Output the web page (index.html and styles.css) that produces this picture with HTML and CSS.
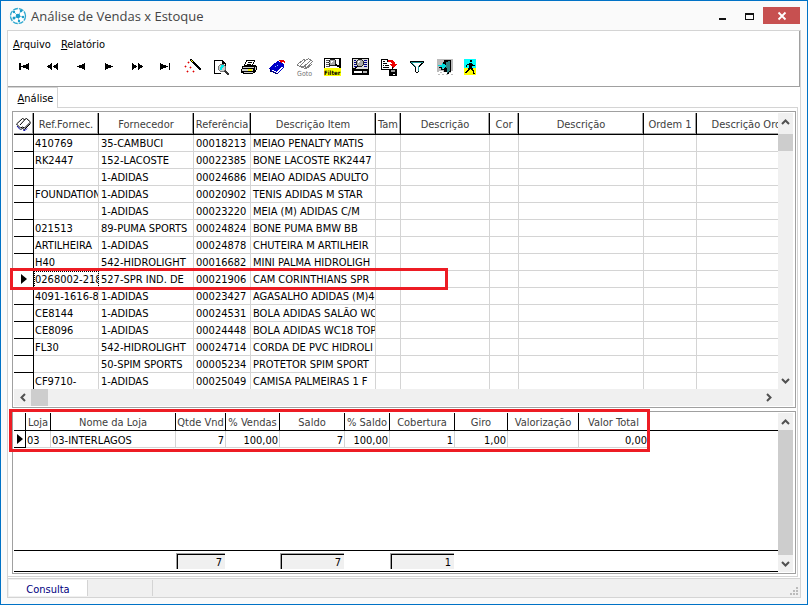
FILE: index.html
```html
<!DOCTYPE html>
<html lang="pt-BR">
<head>
  <meta charset="UTF-8">
  <title>Análise de Vendas x Estoque</title>
  <link rel="stylesheet" href="styles.css">
</head>
<body>

<header class="titulo">
  <svg class="logo" width="18" height="18" viewBox="0 0 18 18">
    <circle cx="9" cy="9" r="7.5" fill="#fff" stroke="#2fa8cf" stroke-width="1.3" stroke-dasharray="5 1"/>
    <path d="M9 9L5 5M9 9L12 4M9 9L14 10M9 9L10 14M9 9L5 11" stroke="#7fcbe2" fill="none"/>
    <circle cx="9" cy="9" r="2.3" fill="#1b9cc9"/>
    <g fill="#1b9cc9"><circle cx="5" cy="5" r="1.2"/><circle cx="12" cy="4" r="1.3"/><circle cx="14" cy="10" r="1.2"/><circle cx="10" cy="14" r="1.2"/><circle cx="5" cy="11" r="1.5"/></g>
  </svg>
  <h1>Análise de Vendas x Estoque</h1>
  <div class="janela">
    <button class="jan" aria-label="Minimizar"><svg width="10" height="10" shape-rendering="crispEdges"><path d="M1 7h7v2H1z" fill="#111"/></svg></button>
    <button class="jan" aria-label="Maximizar"><svg width="10" height="10" shape-rendering="crispEdges"><path d="M0 2h9v7H0zM1 4v4h7V4z" fill="#111" fill-rule="evenodd"/></svg></button>
    <button class="jan fechar" aria-label="Fechar"><svg width="10" height="10"><path d="M1.5 1.5l7 7M8.500 1.5l-7 7" stroke="#fff" stroke-width="1.8"/></svg></button>
  </div>
</header>

<main class="principal">
  <div class="topo">
    <nav class="menu">
      <button><u>A</u>rquivo</button>
      <button><u>R</u>elatório</button>
    </nav>
    <div class="ferramentas">
      <button aria-label="Primeiro"><svg class="icone" viewBox="0 0 18 18"><path d="M4 5h1.500v7H4zM14 5v7L6 8.500z"/></svg></button>
      <button aria-label="Voltar página"><svg class="icone" viewBox="0 0 18 18"><path d="M9 5v7L4 8.500zM15 5v7l-5-3.500z"/></svg></button>
      <button aria-label="Anterior"><svg class="icone" viewBox="0 0 18 18"><path d="M14 5v7L6 8.500z"/></svg></button>
      <button aria-label="Próximo"><svg class="icone" viewBox="0 0 18 18"><path d="M6 5v7l8-3.500z"/></svg></button>
      <button aria-label="Avançar página"><svg class="icone" viewBox="0 0 18 18"><path d="M5 5v7l5-3.500zM11 5v7l5-3.500z"/></svg></button>
      <button aria-label="Último"><svg class="icone" viewBox="0 0 18 18"><path d="M5 5v7l8-3.500zM13.500 5H15v7h-1.500z"/></svg></button>
      <button aria-label="Assistente">
        <svg class="icone" viewBox="0 0 18 18">
          <path d="M7 1h2v1h1v1h1v1h1v1h1v1h1v1h1v1h1v1h1v1h1v2h-2v-1h-1v-1h-1V9h-1V8h-1V7h-1V6h-1V5H9V4H8V3H7z"/>
          <path d="M8 2h1v1h1v1H9V3H8z" fill="#ff0"/>
          <path d="M5 3h1v1h1v1H6v1H5V5H4V4h1zM2 7h1v1h1v1H3v1H2V9H1V8h1zM7 8h1v1h1v1H8v1H7v-1H6V9h1zM4 12h1v1h1v1H5v1H4v-1H3v-1h1zM10 12h1v1h1v1h-1v1h-1v-1H9v-1h1z" fill="#f4a0a0"/>
          <path d="M5 4h1v1H5zM2 8h1v1H2zM7 9h1v1H7zM4 13h1v1H4zM10 13h1v1h-1z" fill="#d00"/>
        </svg>
      </button>
      <button aria-label="Visualizar">
        <svg class="icone" viewBox="0 0 18 18">
          <path d="M3 2h9v1h1v1h1v1h1v3h-1V6h-3V3H4v12h6v1H3z"/>
          <path d="M9 6h4v1h1v1h1v4h-1v1h-1v1H9v-1H8v-1H7V8h1V7h1z" fill="#777"/>
          <path d="M9 7h4v1h1v4h-1v1H9v-1H8V8h1z" fill="#ccc"/>
          <path d="M10 7h3v2h-1v1h-1v2H9V9h1z" fill="#0ee"/>
          <path d="M14 12h1v1h1v1h1v1h1v2h-2v-1h-1v-1h-1v-1h-1v-1h1z" fill="#333"/>
        </svg>
      </button>
      <button aria-label="Imprimir">
        <svg class="icone" viewBox="0 0 18 18">
          <path d="M7 2h9v2h-1v2h-1v1h3v1h1v4h-1v2h-1v1h-2v1H4v-1H2v-4h1V8h2V6h1V4h1z"/>
          <path d="M8 3h7v1h-1v2h-1v1H6V6h1V4h1z" fill="#fff"/>
          <path d="M9 4h4v1H9zM8 6h4v1H8z"/>
          <path d="M4 9h11v1H4zM3 11h11v2H3zM5 14h9v1H5zM16 9h1v3h-1z" fill="#ccc"/>
          <path d="M9 11h4v2H9z" fill="#ee0"/>
        </svg>
      </button>
      <button aria-label="Livro">
        <svg class="icone" viewBox="0 0 18 18">
          <path d="M10 3h2v1h2v1h2v1h1v4h-1v1h-1v1h-1v1h-1v1h-1v1h-1v1H9v-1H7v-1H5v-1H3v-2H2v-1h1V9h1V8h1V7h1V6h1V5h2V4h1z" fill="#0000c8"/>
          <path d="M5 12h2v1h2v1h1v-1h1v-1h1v-1h1v-1h1V9h2v1h-1v1h-1v1h-1v1h-1v1h-1v1H9v-1H7v-1H5z" fill="#fff"/>
          <path d="M3 11h1v2h2v1h2v1h3v1H8v-1H6v-1H3z" fill="#006"/>
          <path d="M12 2h5v1h1v2h-1V4h-2v1h-1V4h-1V3h-1z" fill="#e00"/>
          <path d="M10 7h1v1h-1zM8 8h1v1H8z" fill="#8cf"/>
        </svg>
      </button>
      <button aria-label="Ir para">
        <svg class="icone" viewBox="0 0 18 18">
          <path d="M2.500 6.500l6-5 2 1 3-2 4 3-6 6-2-1-2 1-5-2M10 3L5 8M6 8l2.500 1L15 3M9 10l2 1 6-5" fill="none" stroke="#808080"/>
          <text class="mini cinza" x="2" y="18">Goto</text>
        </svg>
      </button>
      <button aria-label="Filtrar">
        <svg class="icone" viewBox="0 0 18 18">
          <path d="M1 0h17v1H1zM1 1h1v9H1zM16 1h2v9h-2z"/>
          <path d="M3 2h3v1H3zM3 4h2v1H3zM3 6h3v1H3zM3 8h4v1H3z" fill="#555"/>
          <circle cx="9.500" cy="4.500" r="3.500" fill="#aaa" stroke="#222"/>
          <path d="M8 3h2v1H9v1H8z" fill="#fff"/><path d="M12 6h2v1h3v2h-3V8h-2z"/>
          <path d="M1 10h17v8H1z" fill="#ff0"/>
          <text class="mini forte" x="1" y="17">Filter</text>
        </svg>
      </button>
      <button aria-label="Localizar">
        <svg class="icone" viewBox="0 0 18 18">
          <path d="M1 0h17v17H1z"/><path d="M2 1h15v10H2z" fill="#ddd"/>
          <path d="M3 2h2v1H3zM3 4h2v1H3zM3 6h2v1H3zM3 8h3v1H3zM13 2h3v1h-3zM13 4h3v1h-3zM13 6h3v1h-3zM13 8h3v1h-3z" fill="#008"/>
          <circle cx="9" cy="5" r="3.500" fill="#aaa" stroke="#222"/><path d="M7 3h2v1H8v1H7z" fill="#fff"/>
          <path d="M6 8h1v1H6v1H5v1H4v1H2v-2h2V9h2z"/>
          <path d="M3 13h8v2H3z" fill="#fff"/><path d="M12 13h4v2h-4z" fill="#bbb"/>
        </svg>
      </button>
      <button aria-label="Salvar">
        <svg class="icone" viewBox="0 0 18 18">
          <path d="M2 1h7v1h1v1h4v9H2z"/><path d="M3 2h5v2h5v7H3z" fill="#fff"/>
          <path d="M4 3h2v1H4zM4 5h4v1H4zM4 7h1v1H4zM6 7h4v1H6zM4 9h6v1H4z"/>
          <path d="M9 2h5v1h1v1h1v2h2v1h-1v1h-1v1h-1v1h-1V9h-1V8h-1V7h-1V6h2V5h-1V4H9z" fill="#e00"/>
          <path d="M10 11h8v7h-8z"/><path d="M12 12h4v2h-4z" fill="#999"/><path d="M14 16h2v1h-2z" fill="#fff"/>
        </svg>
      </button>
      <button aria-label="Funil">
        <svg class="icone" viewBox="0 0 18 18">
          <path d="M3 3h14v2h-1v1h-1v1h-1v1h-1v1h-1v5h-1v1H9v-1H8V9H7V8H6V7H5V6H4V5H3z"/>
          <path d="M6 5h8v1h-1v1h-1v1h-1v6H9V8H8V7H7V6H6z" fill="#fff"/>
          <path d="M4 4h12v1H4zM5 5h1v1h1v1h1v1h1v1H8V8H7V7H6V6H5zM11 8h1v5h-1z" fill="#299"/>
        </svg>
      </button>
      <button aria-label="Sair">
        <svg class="icone" viewBox="0 0 18 18">
          <path d="M2 1h16v12H2z" fill="#bbb"/>
          <path d="M2 13h2v1H2zM5 14h2v1H5zM8 13h2v1H8zM3 16h2v1H3zM7 16h2v1H7zM14 14h2v1h-2zM16 16h2v1h-2zM11 16h2v1h-2z" fill="#bbb"/>
          <path d="M9 2h7v12h-2v2h-2v-2H9z"/><path d="M11 4l4-1v10l-3 2z" fill="#388"/>
          <path d="M3 7h4V5h1v1h2v1h1v2h-1v1H8v1H7V9H5V8H3z" fill="#0dd"/><path d="M4 9h3v2h2v1H6v-2H4zM8 4h1v2H8z"/>
        </svg>
      </button>
      <button aria-label="Fechar tela">
        <svg class="icone" viewBox="0 0 18 18">
          <path d="M1 1h12v9H1z" fill="#0ff"/><path d="M1 10h12v7H1z" fill="#ff0"/>
          <path d="M7 2h2v2H7zM6 5h3v1h1v1h2v1H9v2h1v2h1v3h1v1h-2v-3H9v-1H8v-1H7v1H6v1H5v1H4v1H2v-1h1v-1h1v-1h1v-2h1V7H4v2H3V7h1V6h2z"/>
        </svg>
      </button>
    </div>
  </div>

  <div class="abas"><button class="aba"><span><u>A</u>nálise</span></button></div>

  <section class="painel">
    <div class="grade">
      <div class="corpo">
        <div class="area">
          <table class="tabela itens">
            <colgroup><col class="c20"><col class="c65"><col class="c95"><col class="c57"><col class="c125"><col class="c25"><col class="c89"><col class="c29"><col class="c125"><col class="c53"><col class="c125"></colgroup>
            <thead>
              <tr>
                <th><svg class="livro" width="17" height="14" viewBox="0 0 17 14"><path d="M1.500 7l6-5.500 2 1 2-1 4 3.500-6 6-2-1-2 1z" fill="#fff" stroke="#000"/><path d="M10 2.500L5 8M7 10l-.5 1M5.500 12.500l2-1 2 1 6-6" fill="none" stroke="#000"/><path d="M2 9l3 3.500M8 13l2 .5 2-2" stroke="#00a" fill="none"/></svg></th>
                <th>Ref.Fornec.</th><th>Fornecedor</th><th>Referência</th><th>Descrição Item</th><th>Tam</th><th>Descrição</th><th>Cor</th><th>Descrição</th><th>Ordem 1</th><th>Descrição Ordem 1</th>
              </tr>
            </thead>
            <tbody>
              <tr><td></td><td>410769</td><td>35-CAMBUCI</td><td>00018213</td><td>MEIAO PENALTY MATIS</td><td></td><td></td><td></td><td></td><td></td><td></td></tr>
              <tr><td></td><td>RK2447</td><td>152-LACOSTE</td><td>00022385</td><td>BONE LACOSTE RK2447</td><td></td><td></td><td></td><td></td><td></td><td></td></tr>
              <tr><td></td><td></td><td>1-ADIDAS</td><td>00024686</td><td>MEIAO ADIDAS ADULTO</td><td></td><td></td><td></td><td></td><td></td><td></td></tr>
              <tr><td></td><td>FOUNDATION</td><td>1-ADIDAS</td><td>00020902</td><td>TENIS ADIDAS M STAR</td><td></td><td></td><td></td><td></td><td></td><td></td></tr>
              <tr><td></td><td></td><td>1-ADIDAS</td><td>00023220</td><td>MEIA (M) ADIDAS C/M</td><td></td><td></td><td></td><td></td><td></td><td></td></tr>
              <tr><td></td><td>021513</td><td>89-PUMA SPORTS</td><td>00024824</td><td>BONE PUMA BMW BB</td><td></td><td></td><td></td><td></td><td></td><td></td></tr>
              <tr><td></td><td>ARTILHEIRA</td><td>1-ADIDAS</td><td>00024878</td><td>CHUTEIRA M ARTILHEIR</td><td></td><td></td><td></td><td></td><td></td><td></td></tr>
              <tr><td></td><td>H40</td><td>542-HIDROLIGHT</td><td>00016682</td><td>MINI PALMA HIDROLIGH</td><td></td><td></td><td></td><td></td><td></td><td></td></tr>
              <tr><td><i class="seta"></i></td><td class="foco">0268002-218</td><td>527-SPR IND. DE</td><td>00021906</td><td>CAM CORINTHIANS SPR</td><td></td><td></td><td></td><td></td><td></td><td></td></tr>
              <tr><td></td><td>4091-1616-8</td><td>1-ADIDAS</td><td>00023427</td><td>AGASALHO ADIDAS (M)4</td><td></td><td></td><td></td><td></td><td></td><td></td></tr>
              <tr><td></td><td>CE8144</td><td>1-ADIDAS</td><td>00024531</td><td>BOLA ADIDAS SALÃO WC</td><td></td><td></td><td></td><td></td><td></td><td></td></tr>
              <tr><td></td><td>CE8096</td><td>1-ADIDAS</td><td>00024448</td><td>BOLA ADIDAS WC18 TOP</td><td></td><td></td><td></td><td></td><td></td><td></td></tr>
              <tr><td></td><td>FL30</td><td>542-HIDROLIGHT</td><td>00024714</td><td>CORDA DE PVC HIDROLI</td><td></td><td></td><td></td><td></td><td></td><td></td></tr>
              <tr><td></td><td></td><td>50-SPIM SPORTS</td><td>00005234</td><td>PROTETOR SPIM SPORT</td><td></td><td></td><td></td><td></td><td></td><td></td></tr>
              <tr><td></td><td>CF9710-</td><td>1-ADIDAS</td><td>00025049</td><td>CAMISA PALMEIRAS 1 F</td><td></td><td></td><td></td><td></td><td></td><td></td></tr>
            </tbody>
          </table>
        </div>
        <div class="rolagem">
          <button aria-label="Acima"><svg width="9" height="6"><path d="M1 5l3.500-3.500L8 5" class="traco"/></svg></button>
          <div class="polegar"></div>
          <button class="fim" aria-label="Abaixo"><svg width="9" height="6"><path d="M1 1l3.500 3.500L8 1" class="traco"/></svg></button>
        </div>
      </div>
      <div class="rolagem-h">
        <button aria-label="Esquerda"><svg width="6" height="9"><path d="M5 1L1.500 4.500 5 8" class="traco"/></svg></button>
        <div class="polegar"></div>
        <button class="fim" aria-label="Direita"><svg width="6" height="9"><path d="M1 1l3.500 3.500L1 8" class="traco"/></svg></button>
      </div>
      <div class="destaque linha-atual"></div>
    </div>

    <div class="grade inferior">
      <div class="corpo">
        <div class="area">
          <table class="tabela lojas">
            <colgroup><col class="c12"><col class="c25"><col class="c125"><col class="c50"><col class="c54"><col class="c65"><col class="c45"><col class="c65"><col class="c53"><col class="c71"><col class="c70"><col></colgroup>
            <thead>
              <tr><th></th><th>Loja</th><th>Nome da Loja</th><th>Qtde Vnd</th><th>% Vendas</th><th>Saldo</th><th>% Saldo</th><th>Cobertura</th><th>Giro</th><th>Valorização</th><th>Valor Total</th><th></th></tr>
            </thead>
            <tbody>
              <tr><td><i class="seta"></i></td><td>03</td><td>03-INTERLAGOS</td><td class="num">7</td><td class="num">100,00</td><td class="num">7</td><td class="num">100,00</td><td class="num">1</td><td class="num">1,00</td><td class="num"></td><td class="num">0,00</td><td></td></tr>
            </tbody>
          </table>
          <div class="totais">
            <output class="total qtde">7</output>
            <output class="total saldo">7</output>
            <output class="total cobertura">1</output>
          </div>
        </div>
        <div class="rolagem">
          <button aria-label="Acima"><svg width="9" height="6"><path d="M1 5l3.500-3.500L8 5" class="traco"/></svg></button>
          <div class="polegar cheio"></div>
          <button class="fim" aria-label="Abaixo"><svg width="9" height="6"><path d="M1 1l3.500 3.500L8 1" class="traco"/></svg></button>
        </div>
      </div>
      <div class="destaque loja-atual"></div>
    </div>
  </section>

  <footer class="status">
    <div class="modo">Consulta</div>
    <div class="vazio"></div>
    <svg class="alca" width="9" height="9" shape-rendering="crispEdges"><path d="M6 0h2v2H6zM3 3h2v2H3zM6 3h2v2H6zM0 6h2v2H0zM3 6h2v2H3zM6 6h2v2H6z" fill="#bbb"/></svg>
  </footer>
</main>

</body>
</html>
```
FILE: styles.css
```css
* {
  box-sizing: border-box;
}
body {
  margin: 0;
  height: 100vh;
  display: flex;
  flex-direction: column;
  border: 1px solid #0072c6;
  background: #fafafa;
  font-family: "DejaVu Sans Condensed", Tahoma, sans-serif;
  font-size: 11px;
  color: #000;
  overflow: hidden;
}
button {
  font: inherit;
  color: inherit;
  background: none;
  border: 0;
  padding: 0;
}
svg {
  display: block;
}

/* barra de título */
.titulo {
  display: flex;
  align-items: center;
  height: 29px;
  padding: 0 7px 0 8px;
}
.titulo h1 {
  flex: 1;
  margin: 0 0 0 4px;
  font-family: "Open Sans", sans-serif;
  font-size: 13px;
  font-weight: normal;
  color: #444;
}
.janela {
  display: flex;
}
.jan {
  display: flex;
  align-items: center;
  justify-content: center;
  width: 27px;
  height: 17px;
}
.fechar {
  width: 37px;
  background: #c75050;
}

.principal {
  flex: 1;
  min-height: 0;
  display: flex;
  flex-direction: column;
  margin: 0 6px 6px;
  border: 1px solid #d4d4d4;
  background: #fff;
}

/* menu e botões */
.topo {
  height: 56px;
  border-right: 1px solid #a0a0a0;
  border-bottom: 1px solid #a0a0a0;
}
.menu {
  display: flex;
  gap: 10px;
  height: 22px;
  padding: 4px 5px 0;
}
.ferramentas {
  display: flex;
  height: 28px;
  padding-left: 2px;
}
.ferramentas button {
  display: flex;
  align-items: center;
  justify-content: center;
  width: 28px;
}
.icone {
  width: 18px;
  height: 18px;
  shape-rendering: crispEdges;
}
.mini {
  font-size: 7px;
}
.forte {
  font-size: 6px;
  font-weight: bold;
}
.cinza {
  fill: #777;
}

.abas {
  display: flex;
  height: 21px;
}
.abas::after {
  content: "";
  flex: 1;
  margin-right: 2px;
  border-bottom: 1px solid #d4d4d4;
}
.aba {
  width: 50px;
  padding-left: 6px;
  border-top: 1px solid #d4d4d4;
  border-right: 1px solid #d4d4d4;
}
.painel {
  flex: 1;
  min-height: 0;
  display: flex;
  flex-direction: column;
  gap: 3px;
  margin: 0 2px 1px 0;
  padding: 3px 1px 2px 4px;
  border-right: 1px solid #d4d4d4;
  border-bottom: 1px solid #d4d4d4;
}

/* grades */
.grade {
  position: relative;
  padding: 1px 2px 1px 1px;
  border: 1px solid #a0a0a0;
}
.inferior {
  flex: 1;
  display: flex;
}
.corpo {
  flex: 1;
  display: flex;
}
.area {
  flex: 1;
  min-width: 0;
  overflow: hidden;
  display: flex;
  flex-direction: column;
  justify-content: space-between;
}
.tabela {
  table-layout: fixed;
  border-collapse: separate;
  border-spacing: 0;
  width: 100%;
}
.itens {
  width: 808px;
}
.tabela th, .tabela td {
  padding: 2px 1px 0;
  overflow: hidden;
  white-space: nowrap;
  line-height: 14px;
}
.tabela th {
  border-right: 1px solid #000;
  border-bottom: 1px solid #000;
  font-weight: normal;
  text-align: center;
  color: #404040;
}
.itens th {
  height: 22px;
  box-shadow: inset -1px -1px #a0a0a0;
}
.itens th:first-child {
  padding: 0;
}
.lojas th {
  height: 18px;
}
.tabela td {
  height: 17px;
  border-right: 1px solid #d4d4d4;
  border-bottom: 1px solid #d4d4d4;
}
.lojas td {
  padding-top: 3px;
  line-height: 13px;
}
.itens td + td + td {
  padding-left: 2px;
}
.tabela td:first-child {
  padding-top: 0;
  border-color: #000;
}
.itens tr:last-child td {
  height: 16px;
  border-bottom: 0;
}
.lojas th:last-child {
  border-right: 0;
}
.lojas td:last-child {
  border: 0;
}
.tabela .num {
  text-align: right;
}
.tabela .foco {
  outline: 1px dotted #000;
  outline-offset: -1px;
}
.seta {
  display: block;
  width: 6px;
  margin-left: 6px;
  border: 5px solid transparent;
  border-left: 6px solid #000;
  border-right: 0;
}
.lojas .seta {
  margin-left: 2px;
}
.livro {
  margin: 0 1px;
}

.c12 { width: 12px; }
.c20 { width: 20px; }
.c25 { width: 25px; }
.c29 { width: 29px; }
.c45 { width: 45px; }
.c50 { width: 50px; }
.c53 { width: 53px; }
.c54 { width: 54px; }
.c57 { width: 57px; }
.c65 { width: 65px; }
.c70 { width: 70px; }
.c71 { width: 71px; }
.c89 { width: 89px; }
.c95 { width: 95px; }
.c125 { width: 125px; }

/* barras de rolagem */
.rolagem, .rolagem-h {
  display: flex;
  background: #f0f0f0;
}
.rolagem {
  flex-direction: column;
  width: 15px;
}
.rolagem-h {
  height: 17px;
  padding-right: 16px;
}
.rolagem button, .rolagem-h button {
  display: flex;
  align-items: center;
  justify-content: center;
  width: 17px;
  height: 17px;
}
.rolagem button {
  width: 15px;
}
.fim {
  margin-top: auto;
}
.rolagem-h .fim {
  margin: 0 0 0 auto;
}
.polegar {
  width: 17px;
  background: #cdcdcd;
}
.rolagem .polegar {
  width: 15px;
  height: 17px;
  margin-top: 4px;
}
.rolagem .cheio {
  flex: 1;
  margin: 0;
}
.traco {
  fill: none;
  stroke: #505050;
  stroke-width: 2;
}

.totais {
  display: flex;
  align-items: center;
  height: 22px;
  padding-left: 162px;
  border-top: 1px solid #000;
  border-bottom: 1px solid #000;
}
.total {
  width: 64px;
  height: 16px;
  padding-right: 3px;
  border-top: 1px solid #a0a0a0;
  border-left: 1px solid #a0a0a0;
  box-shadow: inset 1px 1px #000;
  background: #f0f0f0;
  line-height: 17px;
  text-align: right;
}
.qtde {
  width: 49px;
  margin-right: 55px;
}
.saldo {
  margin-right: 46px;
}

/* contornos vermelhos */
.destaque {
  position: absolute;
  border: 3px solid #ed1c24;
  pointer-events: none;
}
.linha-atual {
  top: 156px;
  left: -3px;
  width: 438px;
  height: 22px;
}
.loja-atual {
  top: -3px;
  left: -4px;
  width: 641px;
  height: 43px;
}

.status {
  display: flex;
  height: 19px;
  padding: 1px 1px 1px 1px;
  border-top: 1px solid #d4d4d4;
  background: #f0f0f0;
}
.modo {
  width: 79px;
  border-right: 1px solid #d4d4d4;
  background: #fff;
  color: #000080;
  line-height: 19px;
  text-align: center;
}
.vazio {
  width: 65px;
  border-right: 1px solid #d4d4d4;
}
.alca {
  margin: auto 0 0 auto;
}
```
